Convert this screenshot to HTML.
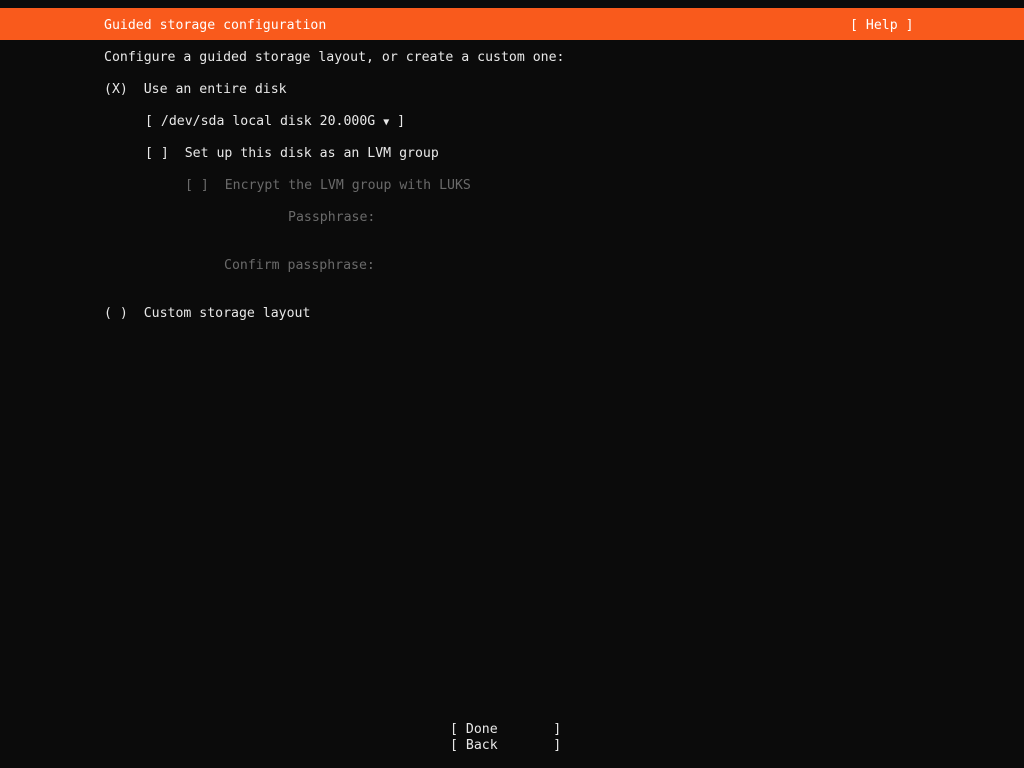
<!DOCTYPE html><html><head><style>
html,body{margin:0;padding:0;width:1024px;height:768px;background:#0b0b0b;overflow:hidden}
.l{position:absolute;left:0;white-space:pre;font-family:"DejaVu Sans Mono","Liberation Mono",monospace;font-size:13.2px;line-height:16px;height:16px;color:#e8e8e8}
.g{color:#6a6a6a}
.bar{position:absolute;left:0;top:8px;width:1024px;height:32px;background:#f95a1c}
</style></head><body>
<div class="bar"></div>
<div class="l" style="top:18px;left:104px;color:#fff">Guided storage configuration</div>
<div class="l" style="top:18px;left:850px;color:#fff">[ Help ]</div>
<div class="l" style="top:50px;left:104px">Configure a guided storage layout, or create a custom one:</div>
<div class="l" style="top:82px;left:104px">(X)  Use an entire disk</div>
<div class="l" style="top:114px;left:145px">[ /dev/sda local disk 20.000G <span style="font-size:10px">▼</span> ]</div>
<div class="l" style="top:146px;left:145px">[ ]  Set up this disk as an LVM group</div>
<div class="l g" style="top:178px;left:185px">[ ]  Encrypt the LVM group with LUKS</div>
<div class="l g" style="top:210px;left:288px">Passphrase:</div>
<div class="l g" style="top:258px;left:224px">Confirm passphrase:</div>
<div class="l" style="top:306px;left:104px">( )  Custom storage layout</div>
<div class="l" style="top:722px;left:450px">[ Done       ]</div>
<div class="l" style="top:738px;left:450px">[ Back       ]</div>
</body></html>
